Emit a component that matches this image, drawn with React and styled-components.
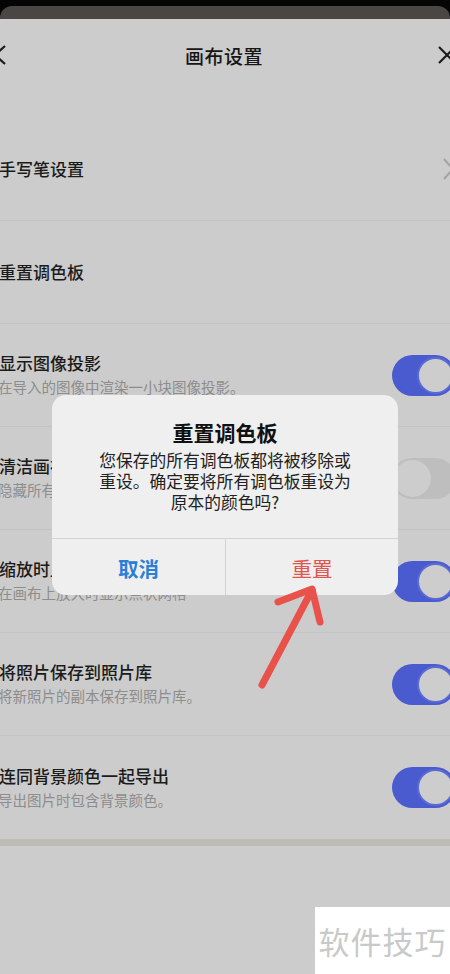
import React from "react";
import styled, { createGlobalStyle } from "styled-components";

const Global = createGlobalStyle`
  html, body { margin: 0; padding: 0; background: #050505; }
  body { font-family: "Noto Sans CJK SC", "Noto Sans", sans-serif; }
  * { box-sizing: border-box; }
`;

const Screen = styled.div`
  position: relative;
  width: 450px;
  height: 974px;
  overflow: hidden;
  background: #050505;
  padding-top: 6px;
`;

const Sheet = styled.div`
  height: 968px;
  background: #4a4644;
  border-radius: 12px 12px 0 0;
  padding-top: 13px;
  display: flex;
  flex-direction: column;
`;

const Panel = styled.div`
  flex: 1;
  background: #cccccc;
  display: flex;
  flex-direction: column;
`;

const Header = styled.div`
  height: 72px;
  display: flex;
  align-items: center;
  justify-content: space-between;
  margin: 0 -7px 0 -9px;
`;

const HeaderTitle = styled.div`
  font-size: 19px;
  font-weight: 500;
  color: #161616;
  letter-spacing: 0.5px;
`;

const IconBox = styled.div`
  width: 20px;
  height: 20px;
  display: flex;
`;

const List = styled.div`
  margin-top: 27px;
  display: flex;
  flex-direction: column;
`;

const Row = styled.div`
  height: 103px;
  border-bottom: 1px solid #c3c3c3;
  display: flex;
  align-items: center;
  justify-content: space-between;
  padding-left: 0;
  &:last-child { border-bottom: none; }
`;

const TextCol = styled.div`
  display: flex;
  flex-direction: column;
  gap: 2px;
  margin-top: ${p => (p.$sub ? "-2px" : "0")};
`;

const Title = styled.div`
  font-size: 17px;
  font-weight: 500;
  color: #1b1b1b;
  line-height: 24px;
  margin-left: -1px;
`;

const Sub = styled.div`
  font-size: 14.5px;
  color: #8d8d8d;
  line-height: 20px;
  margin-left: -2px;
`;

const Toggle = styled.div`
  width: 64px;
  height: 41px;
  margin-right: -6px;
  border-radius: 21px;
  background: ${p => (p.$on ? "#4a5bcf" : "#bebebe")};
  display: flex;
  align-items: center;
  justify-content: ${p => (p.$on ? "flex-end" : "flex-start")};
  padding: 2px;
`;

const Knob = styled.div`
  width: 37px;
  height: 37px;
  border-radius: 50%;
  background: #cdcdcd;
  border: ${p => (p.$on ? "2px solid #5b6bd4" : "none")};
`;

const Chevron = styled.div`
  width: 12px;
  height: 22px;
  margin-right: -5px;
  display: flex;
`;

const BottomStrip = styled.div`
  height: 7px;
  background: #bdbdb6;
`;

const Watermark = styled.div`
  position: absolute;
  right: 0;
  bottom: 0;
  width: 135px;
  height: 67px;
  background: #ffffff;
  display: flex;
  align-items: center;
  justify-content: center;
  font-size: 31px;
  color: #c9c9c9;
  letter-spacing: 1px;
`;

const Dialog = styled.div`
  position: absolute;
  left: 52px;
  top: 395px;
  width: 346px;
  height: 200px;
  background: #efefef;
  border-radius: 14px;
  display: flex;
  flex-direction: column;
  overflow: hidden;
`;

const DialogBody = styled.div`
  flex: 1;
  padding-top: 22px;
  display: flex;
  flex-direction: column;
  align-items: center;
  text-align: center;
`;

const DialogTitle = styled.div`
  font-size: 21px;
  font-weight: 700;
  color: #111;
  line-height: 30px;
`;

const DialogMsg = styled.div`
  margin-top: 3px;
  font-size: 16.8px;
  line-height: 21px;
  color: #222;
`;

const Buttons = styled.div`
  height: 57px;
  border-top: 1px solid #d3d3d3;
  display: grid;
  grid-template-columns: 173px 1fr;
`;

const DlgButton = styled.div`
  display: flex;
  align-items: center;
  justify-content: center;
  font-size: 20.5px;
  font-weight: ${p => (p.$danger ? 400 : 600)};
  color: ${p => (p.$danger ? "#e0554e" : "#2a80d6")};
  border-left: ${p => (p.$danger ? "1px solid #d3d3d3" : "none")};
  padding-top: 2px;
`;

const ArrowSvg = styled.svg`
  position: absolute;
  left: 250px;
  top: 578px;
`;

const rows = [
  { title: "手写笔设置", chevron: true },
  { title: "重置调色板" },
  { title: "显示图像投影", sub: "在导入的图像中渲染一小块图像投影。", on: true },
  { title: "清洁画布模式", sub: "隐藏所有界面元素以获得清洁画布。", on: false },
  { title: "缩放时显示点状网格", sub: "在画布上放大时显示点状网格", on: true },
  { title: "将照片保存到照片库", sub: "将新照片的副本保存到照片库。", on: true },
  { title: "连同背景颜色一起导出", sub: "导出图片时包含背景颜色。", on: true },
];

export default function App() {
  return (
    <Screen>
      <Global />
      <Sheet>
        <Panel>
          <Header>
            <IconBox>
              <svg width="20" height="20" viewBox="0 0 20 20">
                <path d="M14 1 L4 10 L14 19" fill="none" stroke="#1a1a1a" strokeWidth="2.2" />
              </svg>
            </IconBox>
            <HeaderTitle>画布设置</HeaderTitle>
            <IconBox>
              <svg width="20" height="20" viewBox="0 0 20 20">
                <path d="M2 2 L18 18 M18 2 L2 18" fill="none" stroke="#1a1a1a" strokeWidth="2.2" />
              </svg>
            </IconBox>
          </Header>
          <List>
            {rows.map((r, i) => (
              <Row key={i}>
                <TextCol $sub={!!r.sub}>
                  <Title>{r.title}</Title>
                  {r.sub && <Sub>{r.sub}</Sub>}
                </TextCol>
                {r.chevron && (
                  <Chevron>
                    <svg width="12" height="22" viewBox="0 0 12 22">
                      <path d="M1 1 L10 11 L1 21" fill="none" stroke="#a3a3a3" strokeWidth="2" />
                    </svg>
                  </Chevron>
                )}
                {r.on !== undefined && (
                  <Toggle $on={r.on}>
                    <Knob $on={r.on} />
                  </Toggle>
                )}
              </Row>
            ))}
          </List>
          <BottomStrip />
        </Panel>
      </Sheet>

      <Dialog>
        <DialogBody>
          <DialogTitle>重置调色板</DialogTitle>
          <DialogMsg>
            您保存的所有调色板都将被移除或
            <br />
            重设。确定要将所有调色板重设为
            <br />
            原本的颜色吗?
          </DialogMsg>
        </DialogBody>
        <Buttons>
          <DlgButton>取消</DlgButton>
          <DlgButton $danger>重置</DlgButton>
        </Buttons>
      </Dialog>

      <ArrowSvg width="80" height="115" viewBox="0 0 80 115">
        <g fill="none" stroke="#e9524b" strokeWidth="7" strokeLinecap="round" strokeLinejoin="round">
          <path d="M12 107 L62 12" />
          <path d="M28 24 L62 11 L70 44" />
        </g>
      </ArrowSvg>

      <Watermark>软件技巧</Watermark>
    </Screen>
  );
}
